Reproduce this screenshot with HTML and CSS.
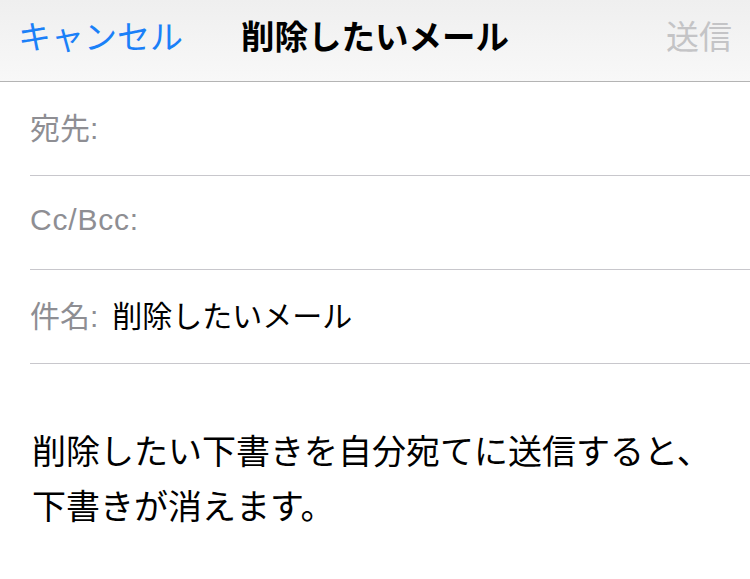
FILE: index.html
```html
<!DOCTYPE html>
<html lang="ja">

<head>
    <meta charset="UTF-8">
    <meta name="viewport" content="width=device-width, initial-scale=1.0">
    <title>削除したいメール</title>
    <link rel="stylesheet" href="styles.css">
</head>

<body>
    <header class="nav-bar">
        <button class="nav-cancel">キャンセル</button>
        <h1 class="nav-title">削除したいメール</h1>
        <button class="nav-send" disabled>送信</button>
    </header>

    <section class="fields">
        <div class="field">
            <span class="label">宛先:</span>
        </div>
        <div class="field">
            <span class="label latin">Cc/Bcc:</span>
        </div>
        <div class="field">
            <span class="label">件名:</span>
            <span class="value">削除したいメール</span>
        </div>
    </section>

    <section class="message">
        <p>削除したい下書きを自分宛てに送信すると、下書きが消えます。</p>
    </section>
</body>

</html>
```

FILE: styles.css
```css
* {
    box-sizing: border-box;
    margin: 0;
    font-family: 'Liberation Sans', 'Noto Sans CJK JP', sans-serif;
}

body {
    background: #fff;
    color: #000;
    width: 750px;
    min-height: 579px;
    overflow: hidden;
}

button {
    appearance: none;
    border: none;
    outline: none;
    background: none;
    padding: 0;
    cursor: pointer;
}

.nav-bar {
    display: grid;
    grid-template-columns: 1fr auto 1fr;
    align-items: center;
    height: 82px;
    padding: 0 18px 12px;
    background: linear-gradient(#efefef, #f8f8f8);
    border-bottom: 1px solid #b4b4b4;
}

.nav-cancel {
    justify-self: start;
    font-size: 33px;
    color: #1a80f8;
}

.nav-title {
    font-size: 33.5px;
    font-weight: 700;
    color: #000;
}

.nav-send {
    justify-self: end;
    font-size: 33px;
    color: #c4c4c6;
}

.fields {
    padding-left: 30px;
}

.field {
    display: flex;
    align-items: center;
    gap: 14px;
    height: 94px;
    padding-bottom: 5px;
    border-bottom: 1px solid #c8c7cc;
    font-size: 30px;
}

.field .label {
    color: #8e8e93;
}

.field .latin {
    letter-spacing: 0.8px;
}

.field .value {
    color: #000;
}

.message {
    padding: 61px 32px 0;
}

.message p {
    font-size: 34px;
    line-height: 55px;
}
```
